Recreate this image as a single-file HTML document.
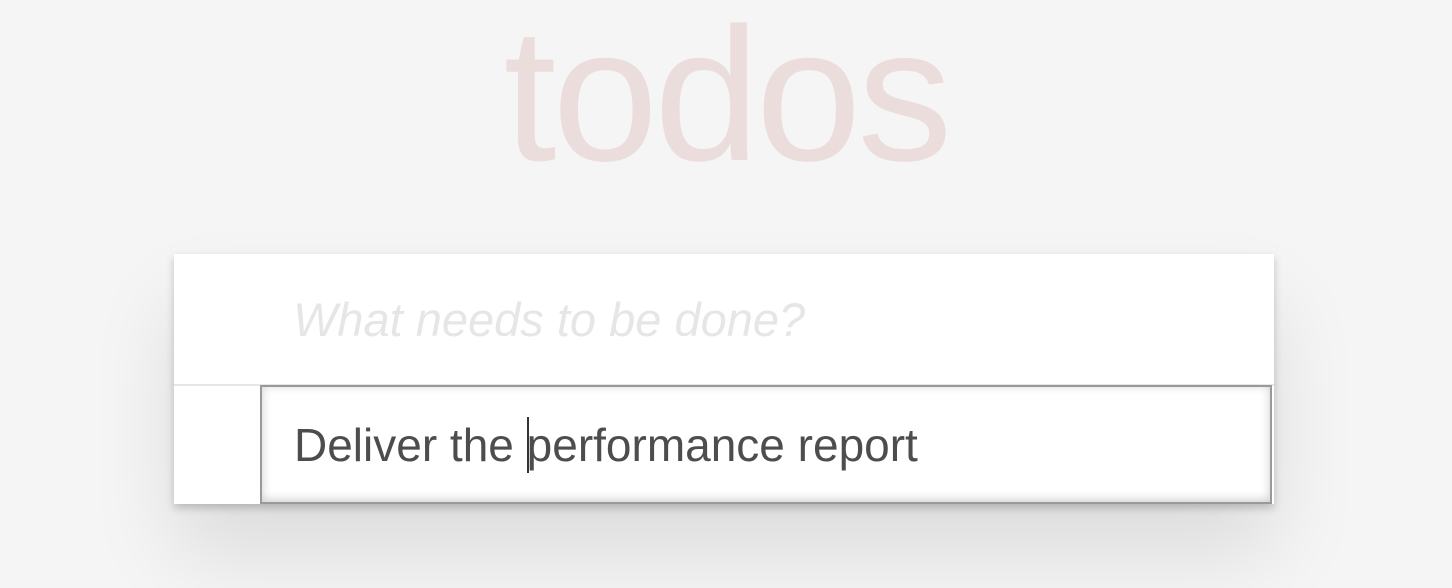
<!DOCTYPE html>
<html><head><style>
html,body{margin:0;padding:0;background:#f5f5f5;width:1452px;height:588px;overflow:hidden;font-family:"Liberation Sans",Helvetica,Arial,sans-serif;}
h1{position:absolute;left:0;width:1452px;top:-14px;margin:0;text-align:center;font-size:190px;font-weight:100;color:rgba(175,47,47,0.12);letter-spacing:-4px;}
.app{position:absolute;left:174px;top:254px;width:1100px;height:250px;background:#fff;box-shadow:0 4px 8px rgba(0,0,0,0.2),0 50px 80px 0 rgba(0,0,0,0.1);}
.ph{position:absolute;left:119px;top:38px;font-size:47px;font-style:italic;color:#e6e6e6;font-weight:300;}
.sep{position:absolute;left:0;top:130px;width:1100px;height:2px;background:#e6e6e6;}
.edit{position:absolute;left:86px;top:131px;width:1008px;height:115px;border:2px solid #999;box-shadow:inset 0 -2px 10px rgba(0,0,0,0.2);background:#fff;}
.edit span{position:absolute;left:32px;top:30px;font-size:46px;color:#4d4d4d;white-space:pre;}
.caret{display:inline-block;width:2px;height:56px;background:#333;vertical-align:-12px;margin-right:-2px;}
</style></head><body>
<h1>todos</h1>
<div class="app">
<div class="ph">What needs to be done?</div>
<div class="sep"></div>
<div class="edit"><span>Deliver the <i class="caret"></i>performance report</span></div>
</div>
</body></html>
